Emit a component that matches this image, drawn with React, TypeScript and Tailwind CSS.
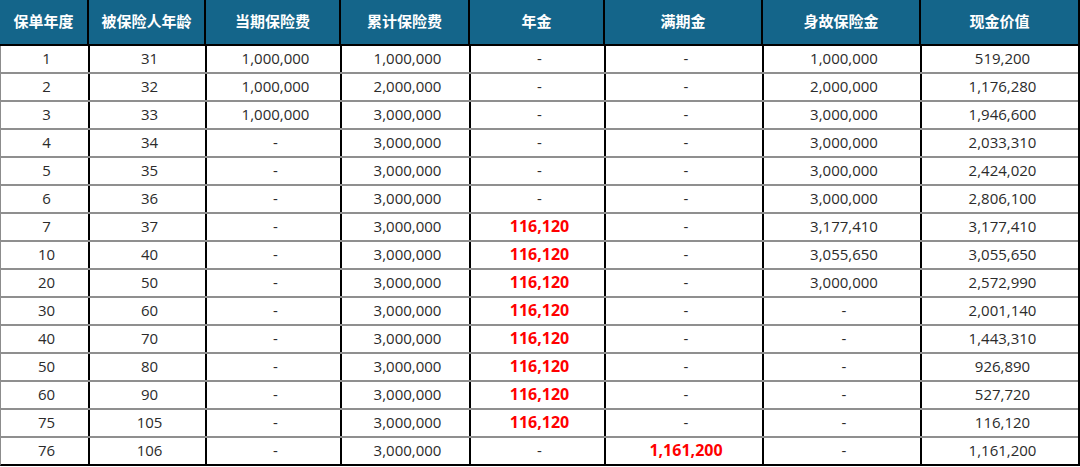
const headers = ["保单年度", "被保险人年龄", "当期保险费", "累计保险费", "年金", "满期金", "身故保险金", "现金价值"];

type Row = [string, string, string, string, string, string, string, string];

const rows: Row[] = [
  ["1", "31", "1,000,000", "1,000,000", "-", "-", "1,000,000", "519,200"],
  ["2", "32", "1,000,000", "2,000,000", "-", "-", "2,000,000", "1,176,280"],
  ["3", "33", "1,000,000", "3,000,000", "-", "-", "3,000,000", "1,946,600"],
  ["4", "34", "-", "3,000,000", "-", "-", "3,000,000", "2,033,310"],
  ["5", "35", "-", "3,000,000", "-", "-", "3,000,000", "2,424,020"],
  ["6", "36", "-", "3,000,000", "-", "-", "3,000,000", "2,806,100"],
  ["7", "37", "-", "3,000,000", "116,120", "-", "3,177,410", "3,177,410"],
  ["10", "40", "-", "3,000,000", "116,120", "-", "3,055,650", "3,055,650"],
  ["20", "50", "-", "3,000,000", "116,120", "-", "3,000,000", "2,572,990"],
  ["30", "60", "-", "3,000,000", "116,120", "-", "-", "2,001,140"],
  ["40", "70", "-", "3,000,000", "116,120", "-", "-", "1,443,310"],
  ["50", "80", "-", "3,000,000", "116,120", "-", "-", "926,890"],
  ["60", "90", "-", "3,000,000", "116,120", "-", "-", "527,720"],
  ["75", "105", "-", "3,000,000", "116,120", "-", "-", "116,120"],
  ["76", "106", "-", "3,000,000", "-", "1,161,200", "-", "1,161,200"],
];

// payouts (年金 / 满期金) are highlighted in red
const highlight = (col: number, value: string) => (col === 4 || col === 5) && value !== "-";

const cols = "grid grid-cols-[89px_117px_135px_129px_135px_158px_158px_157px]";

export default function App() {
  return (
    <div className="w-[1080px] h-[467px] bg-white overflow-hidden">
      <div className="w-[1080px] border-r-2 border-black">
        <div className={`${cols} h-[46px] bg-[#14658a] border-b-2 border-black`}>
          {headers.map((h, i) => (
            <div
              key={h}
              className={`flex items-center justify-center pb-0.5 text-white font-bold text-[15px] ${
                i < headers.length - 1 ? "border-r-2 border-black" : ""
              }`}
              style={{ fontFamily: '"Noto Sans CJK SC", "Noto Sans", sans-serif' }}
            >
              {h}
            </div>
          ))}
        </div>
        {rows.map((row, r) => (
          <div
            key={row[0]}
            className={`${cols} h-[28px] border-l border-[#8c8c8c] border-b-2 ${
              r === rows.length - 1 ? "border-b-black" : "border-b-[#8f8f8f]"
            }`}
          >
            {row.map((cell, c) => (
              <div
                key={c}
                className={`flex items-center justify-center pl-1 pb-0.5 ${
                  c < row.length - 1 ? "border-r-2 border-black" : ""
                } ${
                  highlight(c, cell)
                    ? "text-[#ff0000] font-bold text-[16px]"
                    : "text-[#2b2b2b] text-[15px]"
                }`}
                style={{ fontFamily: '"Open Sans", "Noto Sans", sans-serif' }}
              >
                {cell}
              </div>
            ))}
          </div>
        ))}
      </div>
    </div>
  );
}
